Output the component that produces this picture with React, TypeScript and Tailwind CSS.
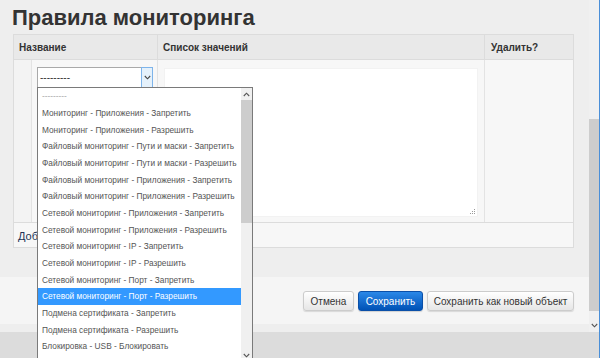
const options = [
  "---------",
  "Мониторинг - Приложения - Запретить",
  "Мониторинг - Приложения - Разрешить",
  "Файловый мониторинг - Пути и маски - Запретить",
  "Файловый мониторинг - Пути и маски - Разрешить",
  "Файловый мониторинг - Приложения - Запретить",
  "Файловый мониторинг - Приложения - Разрешить",
  "Сетевой мониторинг - Приложения - Запретить",
  "Сетевой мониторинг - Приложения - Разрешить",
  "Сетевой мониторинг - IP - Запретить",
  "Сетевой мониторинг - IP - Разрешить",
  "Сетевой мониторинг - Порт - Запретить",
  "Сетевой мониторинг - Порт - Разрешить",
  "Подмена сертификата - Запретить",
  "Подмена сертификата - Разрешить",
  "Блокировка - USB - Блокировать",
];

const selectedIndex = 12;

function Chevron({ up = false, color = "#555" }: { up?: boolean; color?: string }) {
  return (
    <svg width="7" height="5" viewBox="0 0 7 5" fill="none">
      <polyline
        points={up ? "0.8,4 3.5,1.2 6.2,4" : "0.8,1 3.5,3.8 6.2,1"}
        stroke={color}
        strokeWidth="1.1"
      />
    </svg>
  );
}

function OptionList() {
  return (
    <div className="absolute left-0 top-[20px] z-10 flex h-[275px] w-[216px] border border-[#7a7a7a] bg-white">
      {/* Items */}
      <div className="flex flex-1 flex-col overflow-hidden">
        {options.map((opt, i) => (
          <div
            key={opt}
            className={
              i === selectedIndex
                ? "flex h-[16.7px] shrink-0 items-center whitespace-nowrap bg-[#3399ff] pl-[4px] text-[8.3px] text-white"
                : i === 0
                  ? "flex h-[16.7px] shrink-0 items-center whitespace-nowrap pl-[4px] text-[8.3px] text-[#aaaaaa]"
                  : "flex h-[16.7px] shrink-0 items-center whitespace-nowrap pl-[4px] text-[8.3px] text-[#555555]"
            }
          >
            {opt}
          </div>
        ))}
      </div>

      {/* List scrollbar */}
      <div className="flex w-[11px] flex-col bg-[#f0f0f0]">
        <div className="flex h-[12px] items-center justify-center">
          <Chevron up />
        </div>
        <div className="flex-1">
          <div className="h-[123px] bg-[#cdcdcd]" />
        </div>
        <div className="flex h-[12px] items-center justify-center">
          <Chevron />
        </div>
      </div>
    </div>
  );
}

function NameSelect() {
  return (
    <div className="relative">
      <div className="flex h-[21px] w-[116px] border border-[#a9a9a9] bg-white">
        <span className="flex flex-1 items-center pl-[2px] text-[10px] text-[#333]">---------</span>
        <span className="-my-px -mr-px flex w-[12px] items-center justify-center border border-[#7eb4ea] bg-[#e5f1fb]">
          <Chevron color="#444" />
        </span>
      </div>
      <OptionList />
    </div>
  );
}

function Button({ label, primary = false, width }: { label: string; primary?: boolean; width: string }) {
  return (
    <button
      className={
        primary
          ? `flex h-[20px] ${width} items-center justify-center rounded-[3px] border border-[#0a4fa8] bg-gradient-to-b from-[#2a88e8] to-[#0052b6] text-[10px] text-white shadow-[0_1px_1px_rgba(0,0,0,0.15)]`
          : `flex h-[20px] ${width} items-center justify-center rounded-[3px] border border-[#cccccc] bg-gradient-to-b from-white to-[#e6e6e6] text-[10px] text-[#333] shadow-[0_1px_1px_rgba(0,0,0,0.12)]`
      }
    >
      {label}
    </button>
  );
}

export default function App() {
  return (
    <div className="flex h-[358px] w-[600px] overflow-hidden bg-[#eeeeee] font-['Liberation_Sans',Arial,sans-serif] text-[#333]">
      <div className="flex flex-1 flex-col">
        <div className="flex h-[332px] shrink-0">
          {/* Page content */}
          <div className="flex flex-1 flex-col">
            <h1 className="h-[34px] shrink-0 pl-[12px] pt-[7px] text-[22px] font-bold leading-[22px] text-[#333]">
              Правила мониторинга
            </h1>

            {/* Inline table */}
            <div className="ml-[13px] w-[561px] border border-[#dcdcdc]">
              <div className="flex h-[25px] border-b border-[#dcdcdc] bg-[#e9e9e9] text-[10px] font-bold">
                <div className="flex w-[144px] items-center border-r border-[#dcdcdc] pl-[5px]">Название</div>
                <div className="flex w-[327px] items-center border-r border-[#dcdcdc] pl-[5px]">Список значений</div>
                <div className="flex flex-1 items-center pl-[6px]">Удалить?</div>
              </div>

              <div className="flex h-[163px] border-b border-[#dcdcdc] bg-[#f7f7f7]">
                <div className="w-[18px] border-r border-[#e3e3e3] bg-[#f3f3f3]" />
                <div className="w-[126px] border-r border-[#e3e3e3] pl-[5px] pt-[7px]">
                  <NameSelect />
                </div>
                <div className="w-[327px] border-r border-[#e3e3e3] pl-[6px] pt-[8px]">
                  <div className="relative h-[149px] w-[314px] border border-[#f2f2f2] bg-white">
                    <svg className="absolute bottom-[1px] right-[1px]" width="6" height="6" viewBox="0 0 6 6">
                      <rect x="4" y="0" width="1" height="1" fill="#999" />
                      <rect x="2" y="2" width="1" height="1" fill="#999" />
                      <rect x="4" y="2" width="1" height="1" fill="#999" />
                      <rect x="0" y="4" width="1" height="1" fill="#999" />
                      <rect x="2" y="4" width="1" height="1" fill="#999" />
                      <rect x="4" y="4" width="1" height="1" fill="#999" />
                    </svg>
                  </div>
                </div>
                <div className="flex-1" />
              </div>

              <div className="flex h-[24px] items-center bg-[#f7f7f7] pl-[4px] pt-[3px] text-[11px] text-[#223355]">
                Добавить еще один Правило мониторинга
              </div>
            </div>

            <div className="h-[29px] shrink-0" />

            {/* Submit row */}
            <div className="flex h-[47px] shrink-0 justify-end gap-[4px] bg-[#f5f5f5] pr-[15px] pt-[14px]">
              <Button label="Отмена" width="w-[51px]" />
              <Button label="Сохранить" primary width="w-[65px]" />
              <Button label="Сохранить как новый объект" width="w-[147px]" />
            </div>
            <div className="flex-1" />
          </div>

          {/* Page scrollbar */}
          <div className="flex w-[10px] flex-col bg-[#f0f0f0]">
            <div className="flex-1">
              <div className="mt-[119px] h-[192px] bg-[#cdcdcd]" />
            </div>
            <div className="flex h-[14px] items-center justify-center">
              <Chevron />
            </div>
          </div>
        </div>

        <div className="flex-1 bg-[#dcdcdc]" />
      </div>
      <div className="w-px bg-[#4a8fd8]" />
    </div>
  );
}
